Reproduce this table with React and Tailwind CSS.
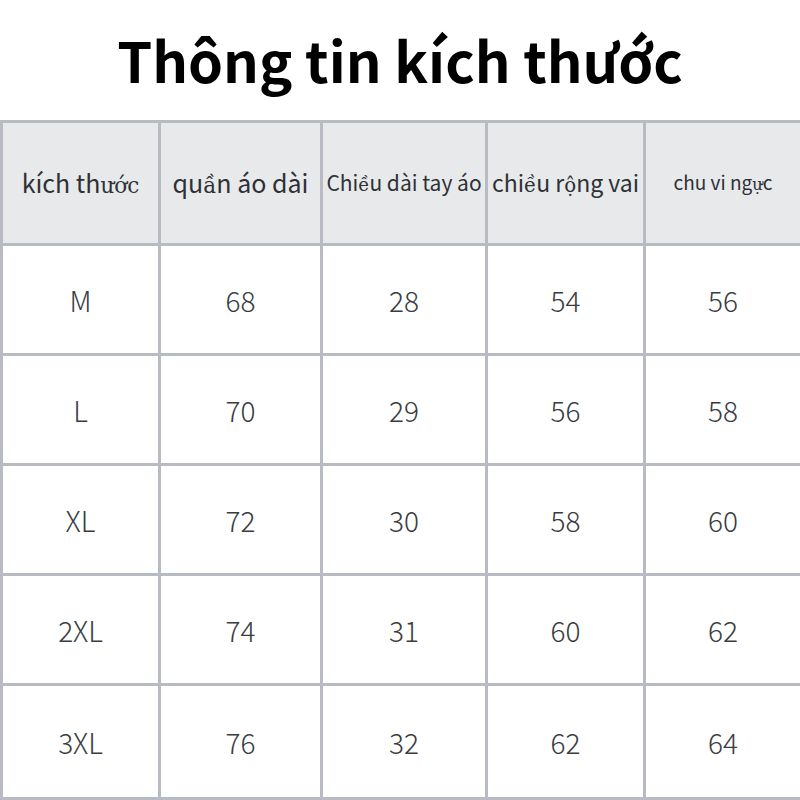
import React from "react";

const rows = [
  ["M", "68", "28", "54", "56"],
  ["L", "70", "29", "56", "58"],
  ["XL", "72", "30", "58", "60"],
  ["2XL", "74", "31", "60", "62"],
  ["3XL", "76", "32", "62", "64"],
];

const S = ({ children }) => (
  <span className="font-['DejaVu_Serif',serif] text-[0.86em] font-normal">{children}</span>
);

export default function App() {
  return (
    <div className="w-[800px] h-[800px] bg-white overflow-hidden font-['Noto_Sans_CJK_SC','Noto_Sans',sans-serif]">
      <div className="h-[120px] flex items-center justify-center pb-[3px]">
        <h1 className="text-[56px] font-bold text-black leading-none">Thông tin kích thước</h1>
      </div>
      <div className="grid grid-cols-[155px_159px_162px_155px_154px] grid-rows-[120px_107px_107px_107px_107px_111px] gap-[3px] pl-[3px] pt-[3px] pb-[3px] bg-[#b8bcc2] text-[#383c42]">
        <div className="bg-[#e8e9eb] flex items-center justify-center text-[25px] font-normal text-[#2e3136]">
          <span>kích th<S>ước</S></span>
        </div>
        <div className="bg-[#e8e9eb] flex items-center justify-center text-[25px] font-normal text-[#2e3136]">
          <span>qu<S>ầ</S>n áo dài</span>
        </div>
        <div className="bg-[#e8e9eb] flex items-center justify-center text-[21px] font-normal whitespace-nowrap text-[#2e3136]">
          <span>Chi<S>ề</S>u dài tay áo</span>
        </div>
        <div className="bg-[#e8e9eb] flex items-center justify-center text-[23px] font-normal whitespace-nowrap text-[#2e3136]">
          <span>chi<S>ề</S>u r<S>ộ</S>ng vai</span>
        </div>
        <div className="bg-[#e8e9eb] flex items-center justify-center text-[19px] font-normal whitespace-nowrap text-[#2e3136]">
          <span>chu vi ng<S>ự</S>c</span>
        </div>
        {rows.map((r) =>
          r.map((v, i) => (
            <div key={r[0] + i} className="bg-white flex items-center justify-center text-[28px] font-light">
              {v}
            </div>
          ))
        )}
      </div>
    </div>
  );
}
